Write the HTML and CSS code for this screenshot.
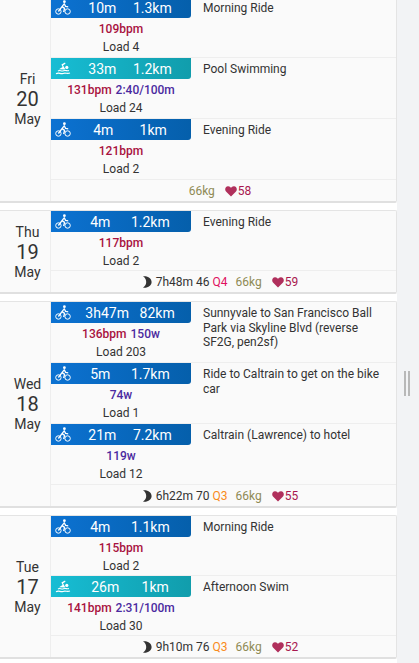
FILE: index.html
```html
<!DOCTYPE html>
<html lang="en">
<head>
    <meta charset="UTF-8">
    <meta name="viewport" content="width=device-width, initial-scale=1.0">
    <title>Training log</title>
    <link rel="stylesheet" href="styles.css">
</head>
<body>
    <svg class="sprites" width="0" height="0">
        <symbol id="bike" viewBox="0 0 16 16">
            <circle cx="3.4" cy="11.5" r="2.7" fill="none" stroke="#fff" stroke-width="1"/>
            <circle cx="12.6" cy="11.5" r="2.7" fill="none" stroke="#fff" stroke-width="1"/>
            <circle cx="9.4" cy="1.7" r="1.4" fill="#fff"/>
            <path d="M3.4 11.5 L7 6.6 L9.6 8.4 L8.6 12 M7 6.6 L9.2 3.8 L10.6 6.4 L13.2 6.8" fill="none" stroke="#fff" stroke-width="1.3" stroke-linejoin="round"/>
        </symbol>
        <symbol id="swim" viewBox="0 0 16 16">
            <circle cx="11.8" cy="6.4" r="1.6" fill="#fff"/>
            <path d="M4 8.2 L7.6 6 L6.4 3.6 L10 1.6 L10.5 2.8 L8 4.2 L10.4 8.6 Z" fill="#fff"/>
            <path d="M3 10 C5 8.6 6.4 10.8 8.4 9.8 C10.6 8.8 12 10.4 14 9.4 M1 12.8 C4 11 5.4 13.4 8 12.4 C10.8 11.4 12 13.2 15 12" fill="none" stroke="#fff" stroke-width="1.1"/>
        </symbol>
        <symbol id="moon" viewBox="0 0 10 12">
            <path d="M1 .3 C6 -.3 9.6 2.6 9.6 6 C9.6 9.4 6 12.3 1 11.7 C3.4 10 4.2 8 4.2 6 C4.2 4 3.4 2 1 .3 Z" fill="#333"/>
        </symbol>
        <symbol id="heart" viewBox="0 0 12 12">
            <path d="M6 11.4 L1 6.4 C-.6 4.6 .2 1.4 3 1.2 C4.4 1.1 5.4 1.9 6 2.9 C6.6 1.9 7.6 1.1 9 1.2 C11.8 1.4 12.6 4.6 11 6.4 Z" fill="#b0305c"/>
        </symbol>
    </svg>

    <main class="log">
        <section class="day">
            <div class="date"><span>Fri</span><b>20</b><span>May</span></div>
            <div class="content">
                <div class="activity">
                    <div class="summary">
                        <div class="bar ride"><svg class="sport"><use href="#bike"/></svg><div class="vals"><span>10m</span><span>1.3km</span></div></div>
                        <div class="metrics"><span class="bpm">109bpm</span></div>
                        <div class="load">Load 4</div>
                    </div>
                    <div class="title">Morning Ride</div>
                </div>
                <div class="activity">
                    <div class="summary">
                        <div class="bar swim"><svg class="sport"><use href="#swim"/></svg><div class="vals"><span>33m</span><span>1.2km</span></div></div>
                        <div class="metrics"><span class="bpm">131bpm</span> <span class="power">2:40/100m</span></div>
                        <div class="load">Load 24</div>
                    </div>
                    <div class="title">Pool Swimming</div>
                </div>
                <div class="activity">
                    <div class="summary">
                        <div class="bar ride"><svg class="sport"><use href="#bike"/></svg><div class="vals"><span>4m</span><span>1km</span></div></div>
                        <div class="metrics"><span class="bpm">121bpm</span></div>
                        <div class="load">Load 2</div>
                    </div>
                    <div class="title">Evening Ride</div>
                </div>
                <div class="footer">
                    <span class="weight">66kg</span>
                    <span class="hr"><svg class="heart"><use href="#heart"/></svg>58</span>
                </div>
            </div>
        </section>

        <section class="day compact">
            <div class="date"><span>Thu</span><b>19</b><span>May</span></div>
            <div class="content">
                <div class="activity">
                    <div class="summary">
                        <div class="bar ride"><svg class="sport"><use href="#bike"/></svg><div class="vals"><span>4m</span><span>1.2km</span></div></div>
                        <div class="metrics"><span class="bpm">117bpm</span></div>
                        <div class="load">Load 2</div>
                    </div>
                    <div class="title">Evening Ride</div>
                </div>
                <div class="footer">
                    <span class="sleep"><svg class="moon"><use href="#moon"/></svg><span>7h48m</span><span>46</span><span class="q4">Q4</span></span>
                    <span class="weight">66kg</span>
                    <span class="hr"><svg class="heart"><use href="#heart"/></svg>59</span>
                </div>
            </div>
        </section>

        <section class="day">
            <div class="date"><span>Wed</span><b>18</b><span>May</span></div>
            <div class="content">
                <div class="activity">
                    <div class="summary">
                        <div class="bar ride"><svg class="sport"><use href="#bike"/></svg><div class="vals"><span>3h47m</span><span>82km</span></div></div>
                        <div class="metrics"><span class="bpm">136bpm</span> <span class="power">150w</span></div>
                        <div class="load">Load 203</div>
                    </div>
                    <div class="title">Sunnyvale to San Francisco Ball Park via Skyline Blvd (reverse SF2G, pen2sf)</div>
                </div>
                <div class="activity">
                    <div class="summary">
                        <div class="bar ride"><svg class="sport"><use href="#bike"/></svg><div class="vals"><span>5m</span><span>1.7km</span></div></div>
                        <div class="metrics"><span class="power">74w</span></div>
                        <div class="load">Load 1</div>
                    </div>
                    <div class="title">Ride to Caltrain to get on the bike car</div>
                </div>
                <div class="activity">
                    <div class="summary">
                        <div class="bar ride"><svg class="sport"><use href="#bike"/></svg><div class="vals"><span>21m</span><span>7.2km</span></div></div>
                        <div class="metrics"><span class="power">119w</span></div>
                        <div class="load">Load 12</div>
                    </div>
                    <div class="title">Caltrain (Lawrence) to hotel</div>
                </div>
                <div class="footer">
                    <span class="sleep"><svg class="moon"><use href="#moon"/></svg><span>6h22m</span><span>70</span><span class="q3">Q3</span></span>
                    <span class="weight">66kg</span>
                    <span class="hr"><svg class="heart"><use href="#heart"/></svg>55</span>
                </div>
            </div>
        </section>

        <section class="day compact">
            <div class="date"><span>Tue</span><b>17</b><span>May</span></div>
            <div class="content">
                <div class="activity">
                    <div class="summary">
                        <div class="bar ride"><svg class="sport"><use href="#bike"/></svg><div class="vals"><span>4m</span><span>1.1km</span></div></div>
                        <div class="metrics"><span class="bpm">115bpm</span></div>
                        <div class="load">Load 2</div>
                    </div>
                    <div class="title">Morning Ride</div>
                </div>
                <div class="activity">
                    <div class="summary">
                        <div class="bar swim"><svg class="sport"><use href="#swim"/></svg><div class="vals"><span>26m</span><span>1km</span></div></div>
                        <div class="metrics"><span class="bpm">141bpm</span> <span class="power">2:31/100m</span></div>
                        <div class="load">Load 30</div>
                    </div>
                    <div class="title">Afternoon Swim</div>
                </div>
                <div class="footer">
                    <span class="sleep"><svg class="moon"><use href="#moon"/></svg><span>9h10m</span><span>76</span><span class="q3">Q3</span></span>
                    <span class="weight">66kg</span>
                    <span class="hr"><svg class="heart"><use href="#heart"/></svg>52</span>
                </div>
            </div>
        </section>
    </main>

    <aside class="gutter"><div class="handle"></div></aside>
</body>
</html>
```

FILE: styles.css
```css
body {
    display: flex;
    margin: 0;
    height: 663px;
    overflow: hidden;
    background: #fff;
    font-family: 'Roboto', sans-serif;
    font-size: 12px;
    color: #333;
}

.sprites {
    position: absolute;
}

.log {
    width: 397px;
    flex: none;
    margin-top: -4px;
}

.day {
    display: flex;
    margin-bottom: 7px;
    background: #fafafa;
    border: 1px solid #e4e4e4;
    border-left: none;
    border-bottom: 2px solid #e0e0e0;
    border-radius: 0 2px 2px 0;
}

.date {
    width: 51px;
    flex: none;
    box-sizing: border-box;
    padding-left: 5px;
    display: flex;
    flex-direction: column;
    justify-content: center;
    align-items: center;
    font-size: 14px;
    line-height: 20px;
    border-right: 1px solid #eee;
}

.date b {
    font-size: 20px;
    font-weight: 400;
}

.content {
    flex: 1;
    min-width: 0;
}

.activity {
    display: flex;
    height: 61px;
    box-sizing: border-box;
    border-bottom: 1px solid #eee;
}

.compact .activity {
    height: 60px;
}

.summary {
    width: 140px;
    flex: none;
    text-align: center;
}

.bar {
    display: flex;
    align-items: center;
    height: 21px;
    color: #fff;
    font-size: 14px;
    border-bottom-right-radius: 3px;
}

.ride {
    background: linear-gradient(90deg, #0c72d2, #055fab);
}

.swim {
    background: linear-gradient(90deg, #17bdd4, #119dac);
}

.sport {
    width: 16px;
    height: 16px;
    margin-left: 4px;
    flex: none;
}

.vals {
    flex: 1;
    display: flex;
    justify-content: space-around;
    margin: 0 11px 0 9px;
}

.metrics {
    margin-top: 3px;
    line-height: 17px;
    font-weight: 500;
    word-spacing: 1px;
}

.load {
    line-height: 18px;
}

.bpm {
    color: #a8123f;
}

.power {
    color: #4b2aa0;
}

.title {
    flex: 1;
    padding: 4px 12px 0 12px;
    line-height: 14.5px;
}

.footer {
    display: flex;
    justify-content: center;
    align-items: center;
    gap: 10px;
    height: 21px;
    padding-right: 7px;
}

.sleep {
    display: flex;
    align-items: center;
    gap: 3px;
    margin-right: -2px;
}

.moon {
    width: 10px;
    height: 12px;
    margin-right: 1px;
}

.q4 {
    color: #e0115f;
}

.q3 {
    color: #f98a1c;
}

.weight {
    color: #8f8a55;
}

.hr {
    display: flex;
    align-items: center;
    color: #a8174f;
}

.heart {
    width: 12px;
    height: 12px;
    margin-right: 1px;
}

.gutter {
    flex: 1;
    background: #f2f3f5;
    padding-top: 371px;
}

.handle {
    width: 2px;
    height: 25px;
    margin-left: 7px;
    border-left: 2px solid #b8b8b8;
    border-right: 2px solid #b8b8b8;
}
```
